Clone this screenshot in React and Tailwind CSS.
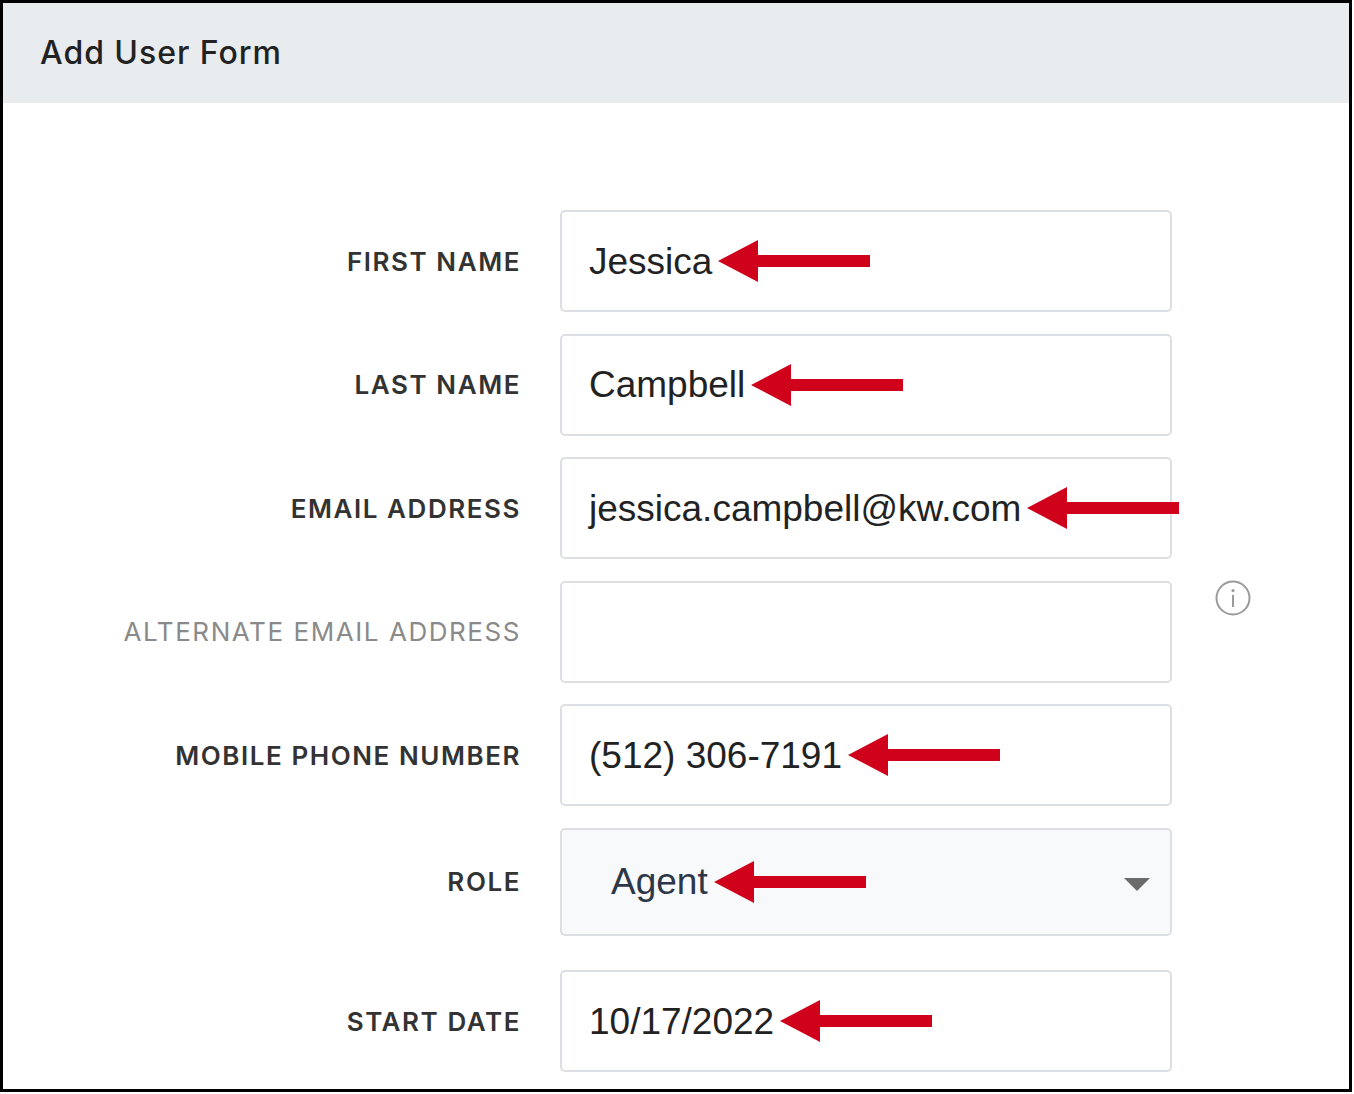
const Arrow = ({ len = 152 }) => (
  <svg width={len} height="44" viewBox={`0 0 ${len} 44`} className="shrink-0 ml-[6px]">
    <polygon points={`0,22 40,1 40,16 ${len},16 ${len},28 40,28 40,43`} fill="#d0021b" />
  </svg>
);

const Row = ({ label, muted, children, h = "h-[102px]", bg = "bg-white", extra, className = "" }) => (
  <div className={`flex items-center ${className}`}>
    <div
      className={`w-[518px] text-right text-[26px] tracking-[0.06em] ${muted ? "text-[#8a8a8a] font-normal" : "text-[#333] font-semibold"}`}
      style={{ fontFamily: "Inter, 'Noto Sans', sans-serif" }}
    >
      {label}
    </div>
    <div className={`relative ml-[39px] w-[612px] ${h} ${bg} border-2 border-[#dcdfe3] rounded-[5px] flex items-center pl-[27px]`}>
      {children}
    </div>
    {extra}
  </div>
);

const Val = ({ children, className = "text-[#222]" }) => (
  <span className={`text-[37px] leading-none whitespace-nowrap ${className}`} style={{ fontFamily: "'Liberation Sans', Arial, sans-serif" }}>
    {children}
  </span>
);

export default function App() {
  return (
    <div className="w-[1354px] h-[1094px] bg-white">
      <div className="w-[1352px] h-[1092px] border-[3px] border-black overflow-hidden">
        <div className="h-[100px] bg-[#e9ecef] flex items-center pl-[37px]">
          <span className="text-[32px] font-medium text-[#222] tracking-[0.03em]" style={{ fontFamily: "Inter, 'Noto Sans', sans-serif" }}>
            Add User Form
          </span>
        </div>
        <div className="pt-[107px] flex flex-col gap-[21.5px]">
          <Row label="FIRST NAME"><Val>Jessica</Val><Arrow /></Row>
          <Row label="LAST NAME"><Val>Campbell</Val><Arrow /></Row>
          <Row label="EMAIL ADDRESS"><Val>jessica.campbell@kw.com</Val><Arrow /></Row>
          <Row
            label="ALTERNATE EMAIL ADDRESS"
            muted
            extra={
              <div className="self-start ml-[42px] mt-[-2px]">
                <svg width="38" height="38" viewBox="0 0 38 38">
                  <circle cx="19" cy="19" r="16.5" fill="none" stroke="#9a9a9a" strokeWidth="2" />
                  <circle cx="19" cy="11.5" r="1.6" fill="#9a9a9a" />
                  <rect x="18" y="16" width="2" height="12" fill="#9a9a9a" />
                </svg>
              </div>
            }
          />
          <Row label="MOBILE PHONE NUMBER"><Val>(512) 306-7191</Val><Arrow /></Row>
          <Row label="ROLE" h="h-[108px]" bg="bg-[#f8f9fb]">
            <div className="pl-[22px] flex items-center"><Val className="text-[#2d3748]">Agent</Val><Arrow /></div>
            <svg width="26" height="14" viewBox="0 0 26 14" className="absolute right-[20px] top-[48px]">
              <polygon points="0,0 26,0 13,13" fill="#6b6b6b" />
            </svg>
          </Row>
          <Row label="START DATE" className="mt-[13px]"><Val>10/17/2022</Val><Arrow /></Row>
        </div>
      </div>
    </div>
  );
}
